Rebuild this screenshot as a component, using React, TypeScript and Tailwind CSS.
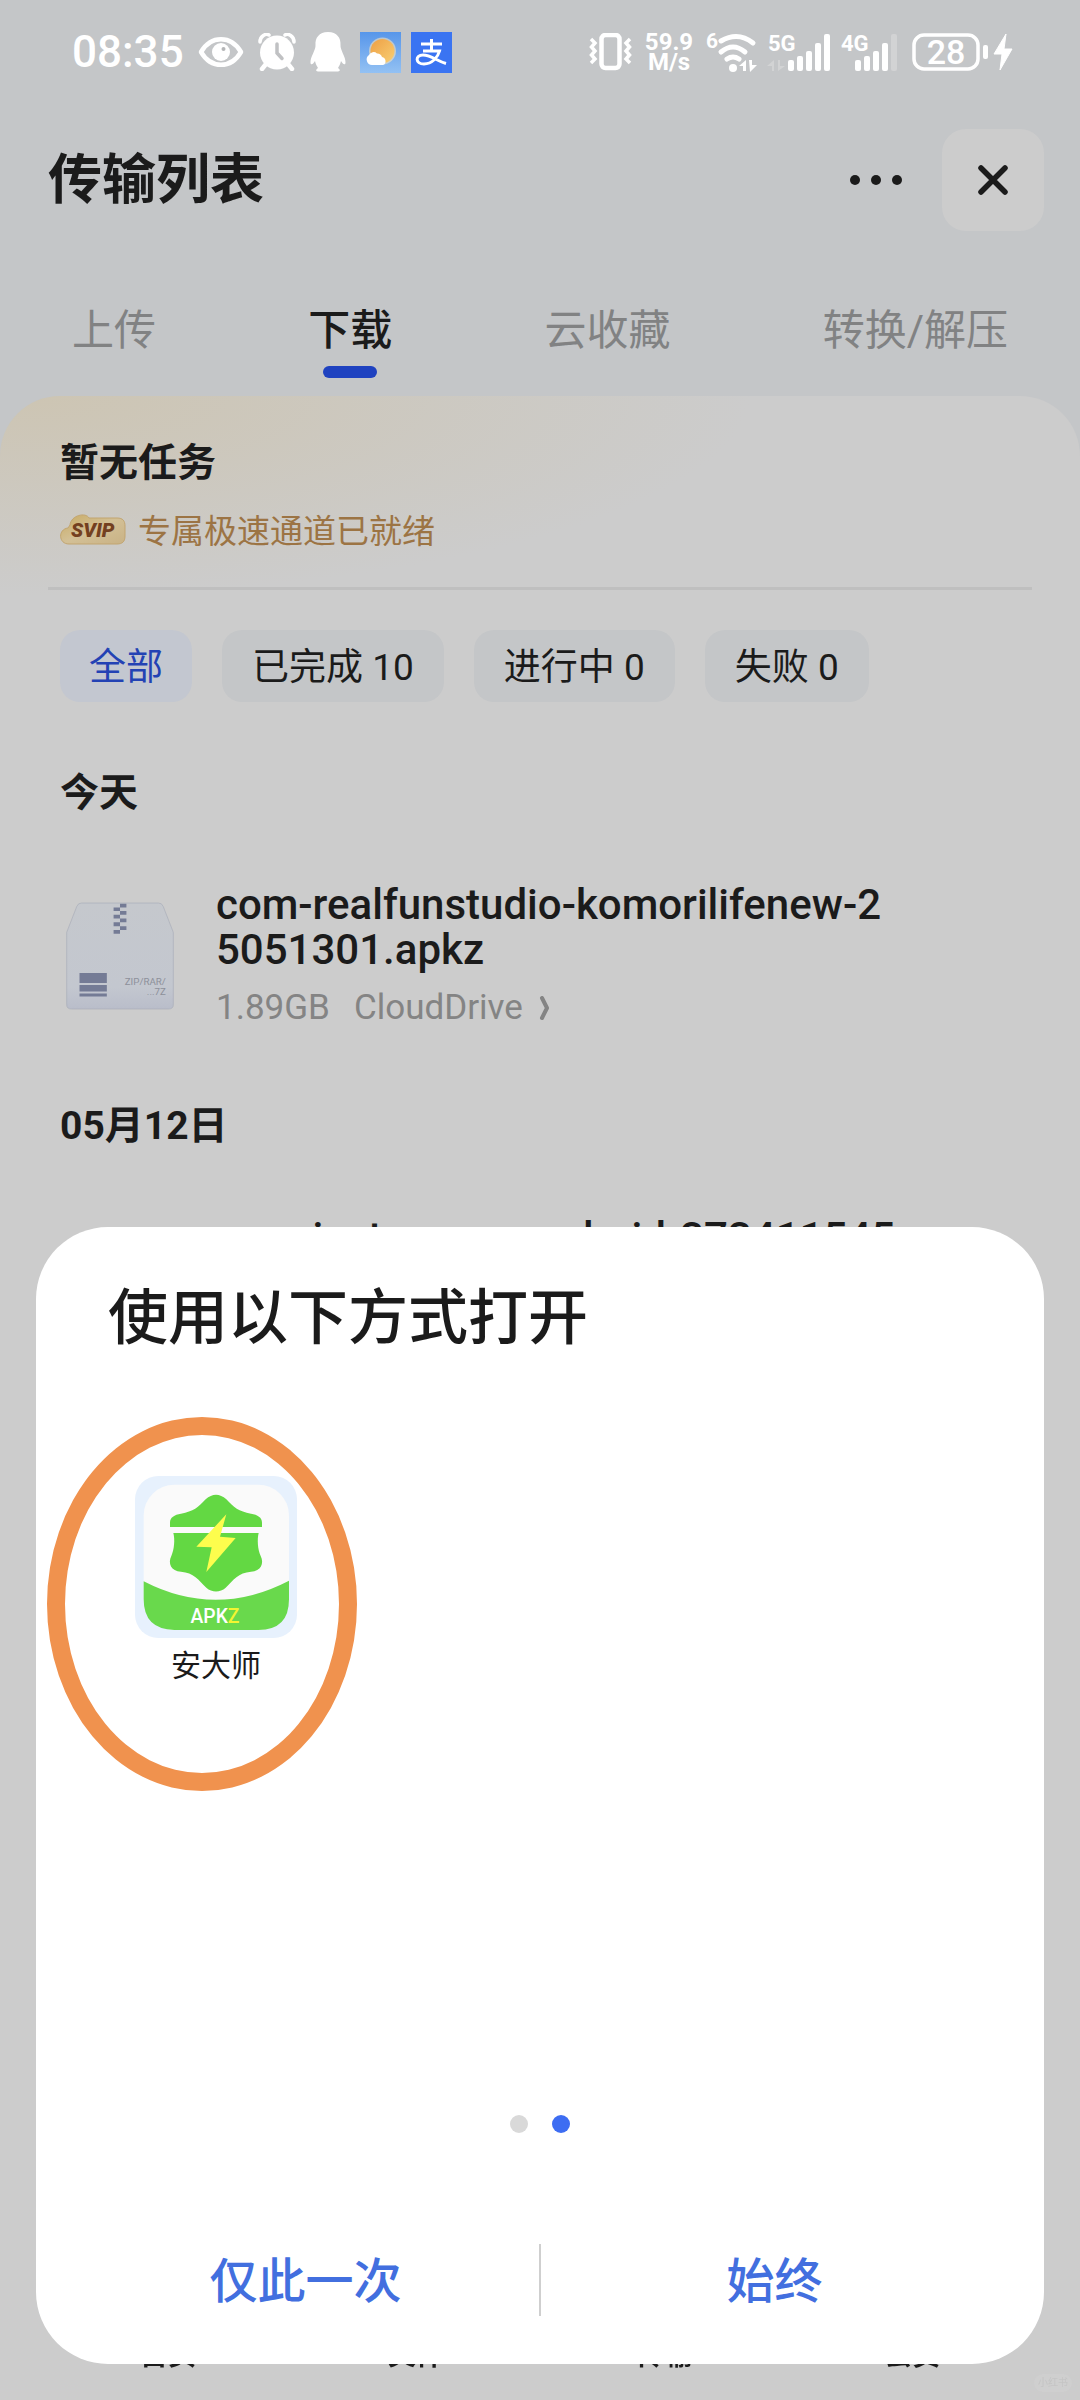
import type { ReactNode } from "react";

const tabs = ["上传", "下载", "云收藏", "转换/解压"];
const filters = ["全部", "已完成 10", "进行中 0", "失败 0"];
const navItems = ["首页", "文件", "传输", "会员"];

function EyeIcon() {
  return (
    <svg width="46" height="32" viewBox="0 0 46 32" aria-label="护眼模式">
      <path d="M3 16C13 -1 33 -1 43 16C33 33 13 33 3 16Z" fill="none" stroke="#fff" strokeWidth="4.5" strokeLinejoin="round" />
      <circle cx="23" cy="16" r="9" fill="#fff" />
      <circle cx="25.500" cy="13" r="2" fill="#b5b6b8" />
    </svg>
  );
}

function AlarmIcon() {
  return (
    <svg width="38" height="38" viewBox="0 0 38 38" aria-label="闹钟">
      <circle cx="19" cy="19.500" r="17" fill="#fff" />
      <path d="M2 9C2 3 8 0 11 2M36 9C36 3 30 0 27 2" fill="none" stroke="#fff" strokeWidth="3.500" strokeLinecap="round" />
      <path d="M8 31L4 36M30 31L34 36" stroke="#fff" strokeWidth="4.500" strokeLinecap="round" />
      <path d="M19 11V20L24 25.500" fill="none" stroke="#c0c1c3" strokeWidth="3.500" strokeLinecap="round" />
    </svg>
  );
}

function PenguinIcon() {
  return (
    <svg width="36" height="40" viewBox="0 0 36 40" aria-label="QQ">
      <path
        d="M18 0C27 0 31 6 30.500 13C30 18 36 25 35.500 31C35 34 32 31 31 29C30.500 32 29 34 28 36C31 38 30 39.500 27 39.500H9C6 39.500 5 38 8 36C7 34 5.500 32 5 29C4 31 1 34 .5 31C0 25 6 18 5.500 13C5 6 9 0 18 0Z"
        fill="#fff"
      />
    </svg>
  );
}

function WeatherIcon() {
  return (
    <svg width="41" height="41" viewBox="0 0 41 41" aria-label="天气">
      <defs>
        <linearGradient id="sky" x1="0" y1="0" x2="0" y2="1">
          <stop offset="0" stopColor="#5796ea" />
          <stop offset="1" stopColor="#93c1f3" />
        </linearGradient>
        <linearGradient id="sun" x1="0" y1="0" x2="1" y2="1">
          <stop offset="0" stopColor="#ee9f45" />
          <stop offset="1" stopColor="#f8cf73" />
        </linearGradient>
      </defs>
      <path d="M0 0H41V41H0Z" fill="url(#sky)" />
      <circle cx="22.500" cy="19" r="13.500" fill="#f6e3bd" opacity=".6" />
      <circle cx="22.500" cy="19" r="12" fill="url(#sun)" />
      <path d="M12 33A5.500 5.500 0 0 1 9 23A5 5 0 0 1 17 21.500A5 5 0 0 1 22 25A4.200 4.200 0 0 1 23 33Z" fill="#fff" />
    </svg>
  );
}

function PayIcon() {
  return (
    <svg width="41" height="41" viewBox="0 0 41 41" aria-label="支付宝">
      <path d="M0 0H41V41H0Z" fill="#3a74f2" />
      <g fill="none" stroke="#fff" strokeWidth="3">
        <path d="M10 12H31M20.500 7V19M12 19H28.500C27 25 21 32 13 32C4 32 4 23 12 23C20 23 26 29 35 31.500" />
      </g>
    </svg>
  );
}

function VibrateIcon() {
  return (
    <svg width="43" height="38" viewBox="0 0 43 38" fill="none" stroke="#fff" aria-label="振动">
      <rect x="12.500" y="2" width="18" height="33" rx="4" strokeWidth="4.500" />
      <path d="M2 6L6 10L2.500 14L6 18L2.500 22L6 26L2 30M41 6L37 10L40.500 14L37 18L40.500 22L37 26L41 30" strokeWidth="3.500" />
    </svg>
  );
}

function WifiIcon() {
  return (
    <svg className="overflow-visible" width="52" height="40" viewBox="0 0 52 40" aria-label="Wi-Fi">
      <text x="0" y="16" fill="#fff" fontSize="21" fontWeight="700">6</text>
      <g fill="none" stroke="#fff" strokeWidth="5" strokeLinecap="round">
        <path d="M15 9Q32 -1 47 11" />
        <path d="M15 20Q27 10 39 20" />
        <path d="M21 27Q27 23 33 27" />
      </g>
      <circle cx="27" cy="36" r="4" fill="#fff" />
      <path d="M33 34L40 28V39H37V34ZM43 28H46V33H51L44 40Z" fill="#fff" />
    </svg>
  );
}

const barTops = [27, 23, 18, 10, 1];

function SignalIcon({ label, strength, start }: { label: string; strength: number; start: number }) {
  return (
    <svg
      className="overflow-visible"
      width={start + 43}
      height="39"
      viewBox={`0 0 ${start + 43} 39`}
      aria-label={label}
    >
      <text x="0" y="18" fill="#fff" fontSize="22" fontWeight="700">{label}</text>
      {strength === 5 && <path d="M-1 33L6 27V38H4V33ZM10 27H12V33H17L10 38Z" fill="#d2d3d4" />}
      {barTops.map((y, i) => (
        <rect
          key={y}
          x={start + i * 9}
          y={y}
          width="6"
          height={38 - y}
          rx="2"
          fill={i < strength ? "#fff" : "#d2d3d4"}
        />
      ))}
    </svg>
  );
}

function BatteryIcon() {
  return (
    <svg className="overflow-visible" width="101" height="38" viewBox="0 0 101 38" aria-label="电量 28%">
      <rect x="2" y="2" width="64" height="34" rx="10" fill="none" stroke="#fff" strokeWidth="3.500" />
      <text x="34" y="31" fill="#fff" fontSize="34" fontWeight="500" textAnchor="middle">28</text>
      <rect x="71" y="12" width="5" height="14" rx="2" fill="#fff" />
      <path d="M94 1L82 21H90L88 37L100 16H92Z" fill="#fff" stroke="#fff" strokeLinejoin="round" />
    </svg>
  );
}

function StatusBar() {
  return (
    <div className="flex h-[104px] items-center justify-between pl-[72px] pr-[67px] text-white">
      <div className="flex items-center gap-[14px]">
        <time className="text-[44px] font-medium leading-none">08:35</time>
        <EyeIcon />
        <AlarmIcon />
        <PenguinIcon />
        <div className="flex gap-[10px]">
          <WeatherIcon />
          <PayIcon />
        </div>
      </div>
      <div className="flex items-center gap-[10px]">
        <VibrateIcon />
        <p className="w-[54px] text-center text-[24px] font-bold leading-[20px]">
          59.9
          <br />
          M/s
        </p>
        <WifiIcon />
        <SignalIcon label="5G" strength={5} start={20} />
        <SignalIcon label="4G" strength={4} start={14} />
        <div className="pl-1">
          <BatteryIcon />
        </div>
      </div>
    </div>
  );
}

function SvipBadge() {
  return (
    <svg width="66" height="32" viewBox="0 0 66 32" aria-label="SVIP">
      <defs>
        <linearGradient id="gold" x1="0" y1="0" x2="1" y2="1">
          <stop offset="0" stopColor="#c9ab62" />
          <stop offset=".5" stopColor="#d3c096" />
          <stop offset="1" stopColor="#c9b285" />
        </linearGradient>
      </defs>
      <path
        d="M10 11C11 1 26 -2 29 4H57C63 4 65 7 65 12V22C65 28 62 30 57 30H9C-2 30 -2 15 8 14Z"
        fill="url(#gold)"
        stroke="#c2a570"
      />
      <text x="11" y="23" fontSize="20" fontWeight="900" fontStyle="italic" fill="#74401f">SVIP</text>
    </svg>
  );
}

function ArchiveIcon() {
  return (
    <svg className="shrink-0" width="108" height="108" viewBox="50 66 320 320" aria-label="压缩文件">
      <defs>
        <linearGradient id="box" x1="0" y1="0" x2="0" y2="1">
          <stop offset="0" stopColor="#c5c8cd" />
          <stop offset=".8" stopColor="#c3c7cf" />
          <stop offset="1" stopColor="#b9bdca" />
        </linearGradient>
      </defs>
      <path
        d="M96 69H324Q334 69 338 79L368 156V370Q368 383 354 383H66Q52 383 52 370V156L82 79Q86 69 96 69Z"
        fill="url(#box)"
        stroke="#a9adb9"
        strokeWidth="2"
      />
      <path
        d="M210 71H229V82H210ZM191 82H210V93H191ZM210 93H229V104H210ZM191 104H210V115H191ZM210 115H229V126H210ZM191 126H210V138H191ZM210 138H229V149H210ZM191 149H210V160H191Z"
        fill="#747b95"
      />
      <path d="M90 276H171V306H90ZM90 312H171V331H90ZM90 337H171V346H90Z" fill="#747b95" />
      <g fill="#8d909a" fontSize="29" textAnchor="end">
        <text x="346" y="311">ZIP/RAR/</text>
        <text x="346" y="342">...7Z</text>
      </g>
    </svg>
  );
}

function AppLogo() {
  return (
    <svg width="162" height="162" viewBox="0 0 486 486" aria-hidden="true">
      <rect width="486" height="486" rx="70" fill="#e7f1fd" />
      <rect x="26" y="26" width="436" height="436" rx="92" fill="#fafafa" />
      <path d="M26 316Q243 428 462 314V370Q462 462 370 462H118Q26 460 26 370Z" fill="#69d94c" />
      <g fill="#63d843">
        <path d="M105 153V140C105 124 118 116 138 113C175 107 190 94 212 70C232 52 254 52 274 70C296 94 311 107 348 113C368 116 381 124 381 140V153Z" />
        <path d="M115 171H371C366 190 368 220 377 240C388 262 378 286 348 287C310 290 295 312 272 335C255 350 231 350 214 335C191 312 176 290 138 287C108 286 98 262 109 240C118 220 120 190 115 171Z" />
      </g>
      <path d="M274 115L255 182L302 186L214 288L230 214L184 212Z" fill="#fdfd4d" />
      <text x="240" y="440" fontSize="58" fontWeight="500" textAnchor="middle" fill="#fff">
        APK<tspan fill="#f2f531">Z</tspan>
      </text>
    </svg>
  );
}

function FileName({ children }: { children: ReactNode }) {
  return <h3 className="max-w-[684px] break-all text-[42px] font-medium leading-[45px]">{children}</h3>;
}

function OpenWithSheet() {
  return (
    <section
      role="dialog"
      aria-labelledby="sheet-title"
      className="fixed inset-x-9 bottom-9 flex h-[1137px] flex-col rounded-[72px] bg-white"
    >
      <h2 id="sheet-title" className="px-[72px] pt-[56px] text-[60px] font-medium leading-[72px]">
        使用以下方式打开
      </h2>
      <div className="flex flex-1 px-[72px] pt-[121px]">
        <button className="relative flex w-[216px] flex-col items-center self-start">
          <AppLogo />
          <span className="pt-[9px] text-[30px] leading-[38px]">安大师</span>
          <span className="pointer-events-none absolute -left-[61px] -top-[59px] h-[374px] w-[310px] rounded-[50%] border-[18px] border-[#f0924e]" />
        </button>
      </div>
      <div className="flex justify-center gap-6">
        <span className="size-[18px] rounded-full bg-[#d9d9d9]" />
        <span className="size-[18px] rounded-full bg-[#3d6df2]" />
      </div>
      <div className="flex items-center pb-[46px] pt-[109px] text-[48px] font-medium leading-[72px] text-[#426fdf]">
        <button className="flex-1 pl-9 pt-1">仅此一次</button>
        <span className="h-[72px] w-0.5 bg-[#cfcfcf]" />
        <button className="flex-1 pr-9 pt-1">始终</button>
      </div>
    </section>
  );
}

export default function App() {
  return (
    <div className="flex min-h-screen flex-col overflow-hidden bg-[#c4c6c8] font-[Roboto,'Noto_Sans_CJK_SC',sans-serif] text-[#1b1b1b]">
      <StatusBar />
      <header className="flex items-center justify-between pb-[36px] pl-12 pr-9 pt-[25px]">
        <h1 className="pt-0.5 text-[54px] font-bold leading-[72px]">传输列表</h1>
        <div className="flex items-center gap-10">
          <button aria-label="更多" className="flex gap-[11px]">
            <span className="size-[10px] rounded-full bg-[#1b1b1b]" />
            <span className="size-[10px] rounded-full bg-[#1b1b1b]" />
            <span className="size-[10px] rounded-full bg-[#1b1b1b]" />
          </button>
          <button aria-label="关闭" className="flex size-[102px] items-center justify-center rounded-3xl bg-[#cccccc]">
            <svg width="32" height="32" viewBox="0 0 32 32" stroke="#1b1b1b" strokeWidth="5.500" strokeLinecap="round">
              <path d="M4 4L28 28M28 4L4 28" />
            </svg>
          </button>
        </div>
      </header>
      <nav className="flex h-[129px] justify-between px-[72px]">
        {tabs.map((tab, i) => (
          <button
            key={tab}
            className={
              i === 1
                ? "flex flex-col items-center pt-[38px] text-[42px] font-medium leading-[52px]"
                : "flex flex-col items-center pt-[38px] text-[42px] leading-[52px] text-[#818283]"
            }
          >
            {tab}
            {i === 1 && <span className="mt-[9px] h-3 w-[54px] rounded-full bg-[#1f42c0]" />}
          </button>
        ))}
      </nav>

      <main className="flex-1 rounded-t-[60px] bg-[#cccccc] bg-[radial-gradient(ellipse_720px_200px_at_30px_0px,#cdc5b3,#cccccc)] bg-no-repeat">
        <section className="mx-12 border-b-[3px] border-[#bfbfbf] px-3 pb-[31px] pt-[41px]">
          <h2 className="text-[39px] font-bold leading-[52px]">暂无任务</h2>
          <p className="flex items-center gap-3 pt-[19px] text-[33px] leading-[48px] text-[#9c7444]">
            <span className="pb-1">
              <SvipBadge />
            </span>
            专属极速通道已就绪
          </p>
        </section>
        <div className="flex gap-[30px] px-[60px] pt-10">
          {filters.map((filter, i) => (
            <button
              key={filter}
              className={
                i === 0
                  ? "h-[72px] rounded-[20px] bg-[#c3c7d0] px-[29px] pt-1 text-[37px] text-[#2342b4]"
                  : "h-[72px] rounded-[20px] bg-[#c4c6c8] px-[30px] pt-1 text-[37px]"
              }
            >
              {filter}
            </button>
          ))}
        </div>

        <h2 className="px-[60px] pt-[65px] text-[39px] font-bold leading-[52px]">今天</h2>
        <article className="flex gap-[42px] px-[66px] pt-[63px]">
          <div className="pt-5">
            <ArchiveIcon />
          </div>
          <div>
            <FileName>com-realfunstudio-komorilifenew-25051301.apkz</FileName>
            <p className="flex items-center gap-6 pt-[14px] text-[35px] leading-[44px] text-[#848484]">
              <span>1.89GB</span>
              <a href="#cloud-drive" className="flex items-center gap-4">
                CloudDrive
                <svg width="12" height="24" viewBox="0 0 12 24" fill="none" stroke="#848484" strokeWidth="4" strokeLinecap="round" strokeLinejoin="round">
                  <path d="M3 2L8 12L3 22" />
                </svg>
              </a>
            </p>
          </div>
        </article>

        <h2 className="px-[60px] pt-[70px] text-[39px] font-bold leading-[52px]">05月12日</h2>
        <article className="pl-[216px] pt-[63px]">
          <FileName>com-instanrace-android-373411545</FileName>
        </article>
      </main>

      <nav className="fixed inset-x-0 bottom-[24px] grid grid-cols-4 px-11 text-center text-[28px] font-bold leading-[40px]">
        {navItems.map((item) => (
          <a key={item} href={`#${item}`}>
            {item}
          </a>
        ))}
      </nav>
      <span className="fixed bottom-2 right-2 rounded-full bg-[#cfcfcf] px-1 text-[10px] leading-[18px] text-[#c4c4c4]">小红书</span>
      <OpenWithSheet />
    </div>
  );
}
